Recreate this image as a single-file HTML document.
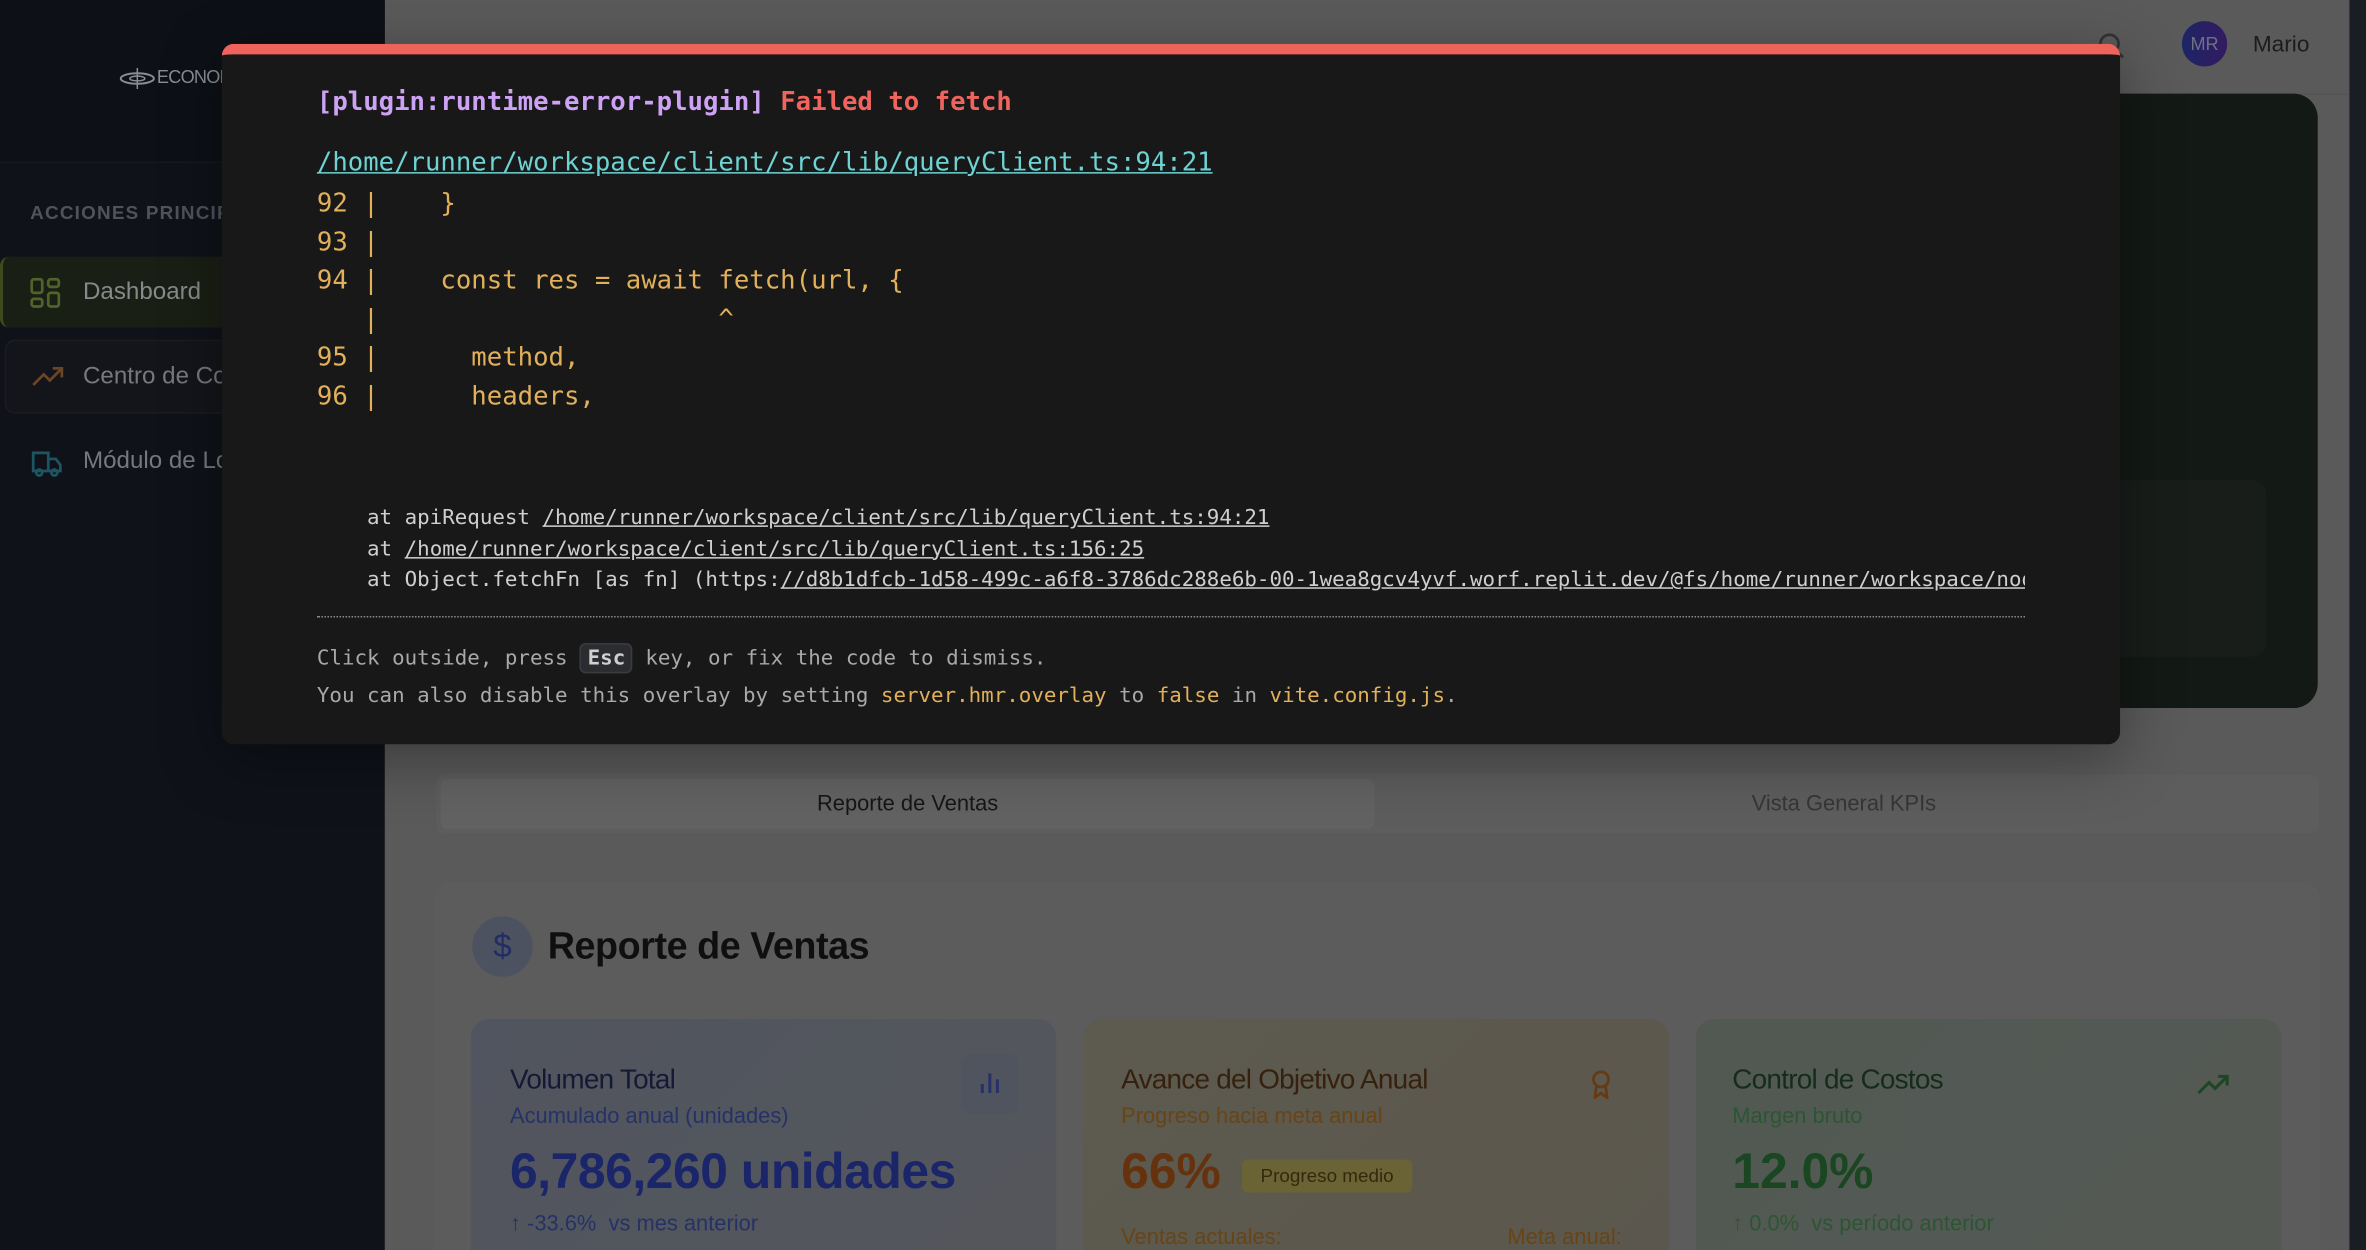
<!DOCTYPE html>
<html><head><meta charset="utf-8"><style>
html,body{margin:0;padding:0;width:2366px;height:1250px;overflow:hidden;background:#5a5a5a}
#s{position:absolute;left:0;top:0;width:1568px;height:828px;transform:scale(1.50893,1.5097);transform-origin:0 0;font-family:"Liberation Sans",sans-serif;background:#5a5a5a;overflow:hidden}
.a{position:absolute}
.mono{font-family:"DejaVu Sans Mono","Liberation Mono",monospace}
</style></head><body><div id="s">
<div class="a" style="left:0;top:0;width:255px;height:828px;background:#0f1219"></div>
<div class="a" style="left:0;top:0;width:255px;height:107px;background:#0d1016;border-bottom:1px solid #161920"></div>
<div class="a" style="left:78px;top:44px;color:#8a8d92;font-size:12px;letter-spacing:-0.5px">
<svg width="26" height="14" viewBox="0 0 26 14" style="vertical-align:middle"><ellipse cx="13" cy="7" rx="11" ry="3.5" fill="none" stroke="#8a8d92" stroke-width="1.3"/><ellipse cx="13" cy="7" rx="5" ry="1.6" fill="none" stroke="#8a8d92"/><line x1="13" y1="0" x2="13" y2="14" stroke="#8a8d92"/></svg>ECONOMY</div>
<div class="a" style="left:20px;top:134px;color:#50535a;font-size:12.5px;letter-spacing:0.8px;font-weight:bold">ACCIONES PRINCIPALES</div>
<div class="a" style="left:0;top:170px;width:255px;height:47px;background:#1a1f15;border-left:2px solid #3e4a1c;border-radius:6px"></div>
<svg class="a" style="left:20px;top:184px" width="20" height="20" viewBox="0 0 20 20" fill="none" stroke="#52632a" stroke-width="1.8"><rect x="1" y="1" width="7" height="9" rx="1.5"/><rect x="12" y="1" width="7" height="5" rx="1.5"/><rect x="12" y="10" width="7" height="9" rx="1.5"/><rect x="1" y="14" width="7" height="5" rx="1.5"/></svg>
<div class="a" style="left:55px;top:185px;color:#87898c;font-size:16px">Dashboard</div>
<div class="a" style="left:3px;top:225px;width:252px;height:47px;background:#14151a;border:1px solid #1e1c1b;border-radius:7px"></div>
<svg class="a" style="left:21px;top:241px" width="22" height="16" viewBox="0 0 22 16" fill="none" stroke="#6a4628" stroke-width="1.8"><path d="M1 14 L8 7 L12 11 L20 3 M14 3 H20 V9"/></svg>
<div class="a" style="left:55px;top:241px;color:#76787c;font-size:16px">Centro de Costos</div>
<svg class="a" style="left:20px;top:297px" width="22" height="20" viewBox="0 0 22 20" fill="none" stroke="#1d5662" stroke-width="1.8"><path d="M2 3 H12 V15 H2 Z M12 7 H17 L20 11 V15 H12"/><circle cx="6" cy="16" r="2"/><circle cx="16" cy="16" r="2"/></svg>
<div class="a" style="left:55px;top:297px;color:#76787c;font-size:16px">Módulo de Logística</div>
<div class="a" style="left:255px;top:62px;width:1303px;height:1px;background:#555"></div>
<svg class="a" style="left:1390px;top:21px" width="18" height="18" viewBox="0 0 18 18" fill="none" stroke="#333" stroke-width="1.8"><circle cx="8" cy="8" r="6"/><path d="M12.5 12.5 L17 17"/></svg>
<div class="a" style="left:1446px;top:14px;width:30px;height:30px;border-radius:50%;background:linear-gradient(90deg,#1c2664,#341a62);color:#707084;font-size:12px;line-height:30px;text-align:center">MR</div>
<div class="a" style="left:1493px;top:21px;color:#1c1c1c;font-size:15px">Mario</div>
<div class="a" style="left:1557px;top:0;width:11px;height:828px;background:#1b1d24"></div>
<div class="a" style="left:1300px;top:62px;width:236px;height:407px;background:#131915;border-radius:16px"></div>
<div class="a" style="left:1380px;top:318px;width:122px;height:117px;background:#191d1a;border-radius:10px"></div>
<div class="a" style="left:289px;top:513px;width:1248px;height:39px;background:#5d5d5d;border-radius:6px"></div>
<div class="a" style="left:292px;top:516px;width:619px;height:33px;background:#626262;border-radius:5px;color:#161616;font-size:14.5px;line-height:35px;text-align:center">Reporte de Ventas</div>
<div class="a" style="left:911px;top:516px;width:622px;height:33px;color:#363636;font-size:14.5px;line-height:35px;text-align:center">Vista General KPIs</div>
<div class="a" style="left:288px;top:584px;width:1250px;height:260px;background:#5c5c5c;border-radius:12px"></div>
<div class="a" style="left:313px;top:607px;width:40px;height:40px;border-radius:50%;background:#4d5260;color:#222d64;font-size:22px;line-height:40px;text-align:center">$</div>
<div class="a" style="left:363px;top:613px;color:#0f0f0f;font-size:25px;font-weight:bold;letter-spacing:-0.3px">Reporte de Ventas</div>
<div class="a" style="left:312px;top:675px;width:388px;height:170px;background:linear-gradient(135deg,#51555f,#54565b);border-radius:12px"></div>
<div class="a" style="left:718px;top:675px;width:388px;height:170px;background:linear-gradient(135deg,#5d5a4f,#5b574e);border-radius:12px"></div>
<div class="a" style="left:1124px;top:675px;width:388px;height:170px;background:linear-gradient(135deg,#525953,#545954);border-radius:12px"></div>
<div class="a" style="left:637px;top:698px;width:38px;height:40px;background:#50545e;border-radius:8px"></div>
<svg class="a" style="left:649px;top:709px" width="14" height="16" viewBox="0 0 14 16" stroke="#26316a" stroke-width="2"><path d="M2 15V9 M7 15V2 M12 15V6"/></svg>
<svg class="a" style="left:1054px;top:708px" width="14" height="20" viewBox="0 0 14 20" fill="none" stroke="#663a10" stroke-width="1.8"><circle cx="7" cy="7" r="5"/><path d="M4 11 L3 19 L7 16 L11 19 L10 11"/></svg>
<svg class="a" style="left:1456px;top:710px" width="22" height="16" viewBox="0 0 22 16" fill="none" stroke="#1d4624" stroke-width="2"><path d="M1 14 L8 7 L12 11 L20 3 M14 3 H20 V9"/></svg>
<div class="a" style="left:338px;top:704px;color:#141a36;font-size:18.5px;letter-spacing:-0.5px">Volumen Total</div>
<div class="a" style="left:338px;top:732px;color:#253266;font-size:14.5px">Acumulado anual (unidades)</div>
<div class="a" style="left:338px;top:757px;color:#1a256a;font-size:33px;font-weight:bold;letter-spacing:-0.3px">6,786,260 unidades</div>
<div class="a" style="left:338px;top:803px;color:#253266;font-size:14.5px">↑ -33.6%&nbsp;&nbsp;vs mes anterior</div>
<div class="a" style="left:743px;top:704px;color:#36200e;font-size:18.5px;letter-spacing:-0.5px">Avance del Objetivo Anual</div>
<div class="a" style="left:743px;top:732px;color:#684416;font-size:14.5px">Progreso hacia meta anual</div>
<div class="a" style="left:743px;top:757px;color:#66320e;font-size:33px;font-weight:bold">66%</div>
<div class="a" style="left:823px;top:768px;width:113px;height:22px;background:#696336;border-radius:4px;color:#36280a;font-size:12.5px;line-height:23px;text-align:center">Progreso medio</div>
<div class="a" style="left:743px;top:812px;color:#684416;font-size:14.5px">Ventas actuales:</div>
<div class="a" style="left:999px;top:812px;color:#684416;font-size:14.5px">Meta anual:</div>
<div class="a" style="left:1148px;top:704px;color:#142c1a;font-size:18.5px;letter-spacing:-0.5px">Control de Costos</div>
<div class="a" style="left:1148px;top:732px;color:#2c5633;font-size:14.5px">Margen bruto</div>
<div class="a" style="left:1148px;top:757px;color:#1a4622;font-size:33px;font-weight:bold">12.0%</div>
<div class="a" style="left:1148px;top:803px;color:#2c5633;font-size:14.5px">↑ 0.0%&nbsp;&nbsp;vs período anterior</div>
<div class="a mono" style="left:147px;top:29px;width:1258px;height:464px;background:#181818;border-top:7px solid #ef635d;border-radius:8px;box-sizing:border-box;box-shadow:0 10px 40px rgba(0,0,0,.35);overflow:hidden">
<div class="a" style="left:63px;top:22px;font-size:17px;font-weight:bold;white-space:pre"><span style="color:#cda2f5">[plugin:runtime-error-plugin]</span> <span style="color:#f0645e">Failed to fetch</span></div>
<div class="a" style="left:63px;top:62px;font-size:17px;color:#6dd3d3;text-decoration:underline;white-space:pre">/home/runner/workspace/client/src/lib/queryClient.ts:94:21</div>
<pre class="a" style="left:63px;top:87px;margin:0;font-family:inherit;font-size:17px;line-height:25.6px;color:#e2b05a">92 |    }
93 |
94 |    const res = await fetch(url, {
   |                      ^
95 |      method,
96 |      headers,</pre>
<pre class="a" style="left:63px;top:297px;width:1132px;overflow:hidden;margin:0;font-family:inherit;font-size:13.8px;line-height:20.6px;color:#cfcfcf">    at apiRequest <u>/home/runner/workspace/client/src/lib/queryClient.ts:94:21</u>
    at <u>/home/runner/workspace/client/src/lib/queryClient.ts:156:25</u>
    at Object.fetchFn [as fn] (https:<u>//d8b1dfcb-1d58-499c-a6f8-3786dc288e6b-00-1wea8gcv4yvf.worf.replit.dev/@fs/home/runner/workspace/node_modules</u></pre>
<div class="a" style="left:63px;top:372px;width:1132px;border-top:1px dotted #8a8a8a"></div>
<div class="a" style="left:63px;top:388px;font-size:13.8px;line-height:25px;color:#a9a9a9;white-space:pre">Click outside, press <span style="background:#2a2c30;border:1px solid #3a3c40;border-radius:4px;padding:1px 4px;color:#cfcfcf;font-weight:bold">Esc</span> key, or fix the code to dismiss.
You can also disable this overlay by setting <span style="color:#e2b05a">server.hmr.overlay</span> to <span style="color:#e2b05a">false</span> in <span style="color:#e2b05a">vite.config.js</span>.</div>
</div>
</div></body></html>
